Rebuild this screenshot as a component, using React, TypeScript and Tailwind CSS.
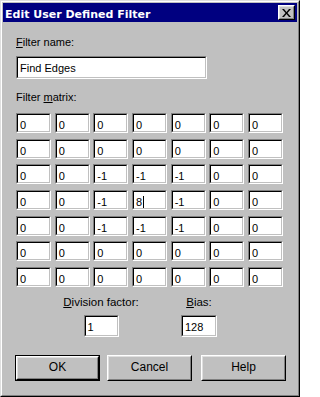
import React from "react";

const FONT = { fontFamily: '"Liberation Sans", Arial, sans-serif' };

function Sunken({ className, children }: { className: string; children?: React.ReactNode }) {
  return (
    <div className={"border border-t-[#808080] border-l-[#808080] border-b-white border-r-white " + className}>
      <div className="h-full w-full overflow-hidden border border-t-black border-l-black border-b-[#c0c0c0] border-r-[#c0c0c0] bg-white pl-[2px] text-[11px] leading-[20px] text-black whitespace-nowrap">
        {children}
      </div>
    </div>
  );
}

function Button({ label, isDefault, className }: { label: string; isDefault?: boolean; className: string }) {
  const inner = (
    <div className="h-full w-full border border-t-white border-l-white border-b-black border-r-black">
      <div className="flex h-full w-full items-center justify-center border border-t-[#dfdfdf] border-l-[#dfdfdf] border-b-[#808080] border-r-[#808080] pb-[1px] text-[12px] text-black">
        {label}
      </div>
    </div>
  );
  if (isDefault) {
    return <div className={"border border-black " + className}>{inner}</div>;
  }
  return <div className={className}>{inner}</div>;
}

const matrix = [
  ["0", "0", "0", "0", "0", "0", "0"],
  ["0", "0", "0", "0", "0", "0", "0"],
  ["0", "0", "-1", "-1", "-1", "0", "0"],
  ["0", "0", "-1", "8", "-1", "0", "0"],
  ["0", "0", "-1", "-1", "-1", "0", "0"],
  ["0", "0", "0", "0", "0", "0", "0"],
  ["0", "0", "0", "0", "0", "0", "0"],
];

export default function App() {
  return (
    <div className="h-[397px] w-[300px] bg-[#c0c0c0]" style={FONT}>
      <div className="h-full w-full border border-t-[#dfdfdf] border-l-[#dfdfdf] border-b-black border-r-black">
        <div className="h-full w-full border border-t-white border-l-white border-b-[#808080] border-r-[#808080] p-px">
          {/* Title bar */}
          <div className="flex h-[19px] items-start justify-between bg-[#000080] pl-[2px] pr-[2px]">
            <div
              className="pt-[5px] text-[11px] font-bold leading-[13px] text-white whitespace-nowrap"
              style={{ fontFamily: '"DejaVu Sans", Verdana, sans-serif' }}
            >
              Edit User Defined Filter
            </div>
            <div className="mt-[2px] h-[15px] w-[17px] border border-t-white border-l-white border-b-black border-r-black bg-[#c0c0c0]">
              <div className="flex h-full w-full items-center justify-center border border-t-[#dfdfdf] border-l-[#dfdfdf] border-b-[#808080] border-r-[#808080]">
                <svg width="9" height="8" viewBox="0 0 9 8" className="block">
                  <path d="M0 0h2l2.5 3 2.5-3h2l-3.5 4 3.5 4h-2l-2.5-3-2.5 3h-2l3.5-4z" fill="black" />
                </svg>
              </div>
            </div>
          </div>

          {/* Body */}
          <div className="flex flex-col pl-[13px]">
            <div className="mt-[14px] text-[11px] leading-[13px] text-black">
              <span className="underline">F</span>ilter name:
            </div>
            <Sunken className="mt-[7px] h-[23px] w-[191px]">
              <div className="leading-[21px]">Find Edges</div>
            </Sunken>

            <div className="mt-[12px] text-[11px] leading-[13px] text-black">
              Filter <span className="underline">m</span>atrix:
            </div>

            <div className="mt-[9px] grid grid-cols-[repeat(7,35px)] gap-x-[3.67px] gap-y-[5.67px]">
              {matrix.flatMap((row, r) =>
                row.map((v, c) => (
                  <Sunken key={r + "-" + c} className="h-[20px] w-[35px]">
                    {v}
                    {r === 3 && c === 3 ? (
                      <span className="ml-px inline-block h-[12px] w-px bg-black align-[-2px]" />
                    ) : null}
                  </Sunken>
                ))
              )}
            </div>

            <div className="ml-[36px] mt-[9px] flex">
              <div className="flex w-[98px] flex-col items-center">
                <div className="text-[11.5px] leading-[13px] text-black whitespace-nowrap">
                  <span className="underline">D</span>ivision factor:
                </div>
                <Sunken className="mt-[6px] h-[22px] w-[35px]">1</Sunken>
              </div>
              <div className="flex w-[98px] flex-col items-center">
                <div className="text-[11.5px] leading-[13px] text-black whitespace-nowrap">
                  <span className="underline">B</span>ias:
                </div>
                <Sunken className="mt-[6px] h-[22px] w-[36px]">128</Sunken>
              </div>
            </div>

            <div className="-ml-px mt-[18px] flex">
              <Button label="OK" isDefault className="h-[26px] w-[85px]" />
              <Button label="Cancel" className="ml-[7px] h-[26px] w-[85px]" />
              <Button label="Help" className="ml-[9px] h-[26px] w-[85px]" />
            </div>
          </div>
        </div>
      </div>
    </div>
  );
}
